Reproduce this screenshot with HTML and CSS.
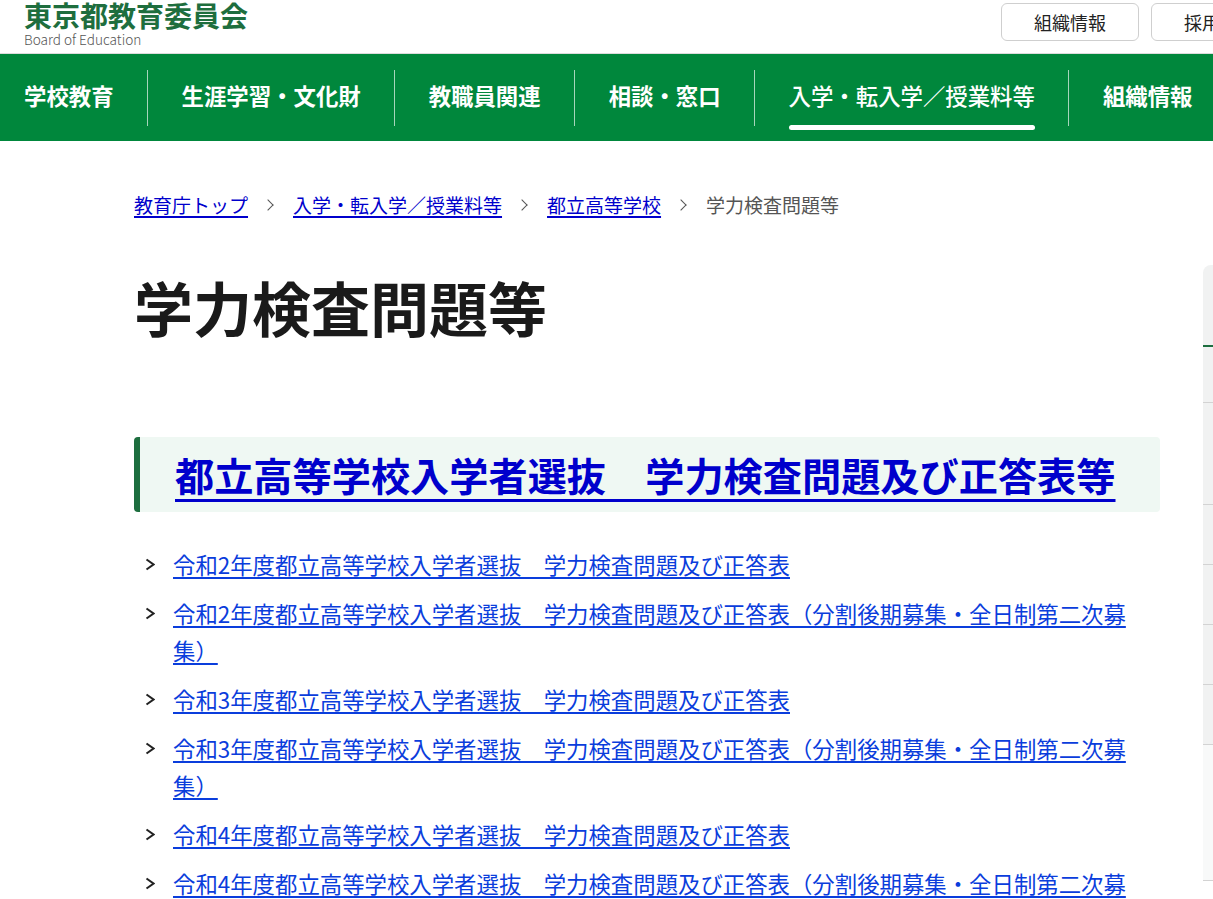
FILE: index.html
```html
<!DOCTYPE html>
<html lang="ja">
  <head>
    <meta charset="UTF-8" />
    <meta name="viewport" content="width=device-width, initial-scale=1.0" />
    <title>学力検査問題等</title>
    <link rel="stylesheet" href="styles.css">
  </head>
  <body>
    <div class="site">
      <header class="site-header">
        <a class="logo" href="#">
          <span class="logo-title">東京都教育委員会</span>
          <span class="logo-sub">Board of Education</span>
        </a>
        <ul class="header-links">
          <li><a href="#">組織情報</a></li>
          <li><a href="#">採用情報</a></li>
        </ul>
      </header>

      <nav class="global-nav">
        <ul>
          <li><a href="#">学校教育</a></li>
          <li><a href="#">生涯学習・文化財</a></li>
          <li><a href="#">教職員関連</a></li>
          <li><a href="#">相談・窓口</a></li>
          <li><a class="active" href="#">入学・転入学／授業料等</a></li>
          <li><a href="#">組織情報</a></li>
        </ul>
      </nav>

      <div class="layout">
        <main class="main">
          <ol class="breadcrumb">
            <li><a href="#">教育庁トップ</a></li>
            <li><a href="#">入学・転入学／授業料等</a></li>
            <li><a href="#">都立高等学校</a></li>
            <li><span class="current">学力検査問題等</span></li>
          </ol>

          <h1 class="page-title">学力検査問題等</h1>

          <section class="section">
            <h2 class="section-heading"><a href="#">都立高等学校入学者選抜　学力検査問題及び正答表等</a></h2>
            <ul class="link-list">
              <li>
                <svg class="chev" viewBox="0 0 10 13"><polyline points="1.5,1.5 8.5,6.5 1.5,11.5" /></svg>
                <a href="#">令和2年度都立高等学校入学者選抜　学力検査問題及び正答表</a>
              </li>
              <li>
                <svg class="chev" viewBox="0 0 10 13"><polyline points="1.5,1.5 8.5,6.5 1.5,11.5" /></svg>
                <a href="#">令和2年度都立高等学校入学者選抜　学力検査問題及び正答表（分割後期募集・全日制第二次募集）</a>
              </li>
              <li>
                <svg class="chev" viewBox="0 0 10 13"><polyline points="1.5,1.5 8.5,6.5 1.5,11.5" /></svg>
                <a href="#">令和3年度都立高等学校入学者選抜　学力検査問題及び正答表</a>
              </li>
              <li>
                <svg class="chev" viewBox="0 0 10 13"><polyline points="1.5,1.5 8.5,6.5 1.5,11.5" /></svg>
                <a href="#">令和3年度都立高等学校入学者選抜　学力検査問題及び正答表（分割後期募集・全日制第二次募集）</a>
              </li>
              <li>
                <svg class="chev" viewBox="0 0 10 13"><polyline points="1.5,1.5 8.5,6.5 1.5,11.5" /></svg>
                <a href="#">令和4年度都立高等学校入学者選抜　学力検査問題及び正答表</a>
              </li>
              <li>
                <svg class="chev" viewBox="0 0 10 13"><polyline points="1.5,1.5 8.5,6.5 1.5,11.5" /></svg>
                <a href="#">令和4年度都立高等学校入学者選抜　学力検査問題及び正答表（分割後期募集・全日制第二次募集）</a>
              </li>
            </ul>
          </section>
        </main>

        <aside class="side-nav">
          <p class="side-title">都立高等学校</p>
          <ul class="side-list">
            <li><a class="is-top" href="#">入学者選抜</a></li>
            <li><a class="is-long" href="#">都立高等学校入学者選抜実施要綱・同細目</a></li>
            <li><a href="#">入学者選抜の結果</a></li>
            <li><a href="#">応募状況</a></li>
            <li><a href="#">学力検査問題等</a></li>
            <li><a href="#">転学・編入学</a></li>
            <li class="side-sub"><a href="#">関連リンク</a></li>
          </ul>
        </aside>
      </div>
    </div>
  </body>
</html>
```

FILE: styles.css
```css
* {
  margin: 0;
  padding: 0;
  box-sizing: border-box;
}
ul,
ol {
  list-style: none;
}
body {
  overflow-x: hidden;
  font-family: "Noto Sans CJK JP", "Noto Sans", sans-serif;
  color: #1a1a1a;
  background: #fff;
  text-spacing-trim: space-all;
}
a {
  color: inherit;
  text-decoration: none;
}
.site {
  min-width: 1313px;
}

/* header */
.site-header {
  display: flex;
  align-items: flex-start;
  height: 54px;
  padding: 0 24px;
  border-bottom: 1px solid #dcdcdc;
}
.logo {
  display: flex;
  flex-direction: column;
}
.logo-title {
  font-size: 28px;
  font-weight: 700;
  line-height: 30px;
  color: #1e6e3e;
}
.logo-sub {
  margin-top: 1px;
  font-size: 13.6px;
  font-weight: 300;
  line-height: 16px;
  color: #555;
}
.header-links {
  display: flex;
  gap: 12px;
  margin-left: auto;
  margin-top: 3px;
}
.header-links a {
  display: flex;
  justify-content: center;
  align-items: center;
  width: 138px;
  height: 38px;
  border: 1px solid #cfcfcf;
  border-radius: 6px;
  font-size: 18px;
  color: #222;
}

/* global nav */
.global-nav {
  height: 87px;
  background-color: #00873c;
}
.global-nav ul {
  display: flex;
  height: 100%;
  padding-left: 24px;
}
.global-nav li {
  display: flex;
  align-items: center;
}
.global-nav li + li::before {
  content: "";
  width: 1px;
  height: 56px;
  background-color: rgba(255, 255, 255, 0.65);
}
.global-nav a {
  position: relative;
  display: flex;
  align-items: center;
  height: 100%;
  padding: 0 33.5px 6px;
  font-size: 22.4px;
  font-weight: 700;
  color: #fff;
  white-space: nowrap;
}
.global-nav li:first-child a {
  padding-left: 0;
}
.global-nav a.active {
  font-weight: 500;
}
.global-nav a.active::after {
  content: "";
  position: absolute;
  left: 33.5px;
  right: 33.5px;
  bottom: 11px;
  height: 5px;
  border-radius: 3px;
  background-color: #fff;
}

/* layout */
.layout {
  display: flex;
  align-items: flex-start;
  padding-left: 134px;
  gap: 43px;
}
.main {
  flex: 0 0 1026px;
  padding-top: 50px;
  padding-bottom: 80px;
}

/* breadcrumb */
.breadcrumb {
  display: flex;
  align-items: center;
  font-size: 19px;
  line-height: 28.5px;
}
.breadcrumb li {
  display: flex;
  align-items: center;
}
.breadcrumb li + li::before {
  content: "";
  width: 7px;
  height: 7px;
  margin: 0 21px 0 16px;
  border-top: 1.5px solid #555;
  border-right: 1.5px solid #555;
  transform: rotate(45deg);
}
.breadcrumb a {
  color: #0000cc;
  text-decoration: underline;
  text-decoration-thickness: 2px;
  text-underline-offset: 3px;
}
.breadcrumb .current {
  color: #555;
}

/* title */
.page-title {
  margin-top: 46px;
  font-size: 59px;
  font-weight: 700;
  line-height: 1.4;
  color: #1a1a1a;
}

/* section */
.section {
  margin-top: 89px;
}
.section-heading {
  padding: 10px 20px 10px 35px;
  border-left: 6px solid #1d6e3f;
  border-radius: 4px;
  background-color: #eff8f3;
  font-size: 39.2px;
  font-weight: 700;
  line-height: 1.4;
}
.section-heading a {
  color: #0000cc;
  text-decoration: underline;
  text-decoration-thickness: 3px;
  text-underline-offset: 8px;
}
.link-list {
  margin-top: 34px;
}
.link-list li {
  display: flex;
  align-items: flex-start;
  font-size: 22.4px;
  line-height: 37px;
}
.link-list li + li {
  margin-top: 12px;
}
.chev {
  flex: 0 0 auto;
  width: 10px;
  height: 13px;
  margin: 12px 18px 0 11px;
  fill: none;
  stroke: #222;
  stroke-width: 2;
}
.link-list a {
  color: #0a3ddc;
  text-decoration: underline;
  text-decoration-thickness: 2px;
  text-underline-offset: 3px;
}

/* side nav */
.side-nav {
  flex: 0 0 280px;
  margin-top: 124px;
  border-radius: 8px 0 0 0;
  background-color: #f1f2f2;
  overflow: hidden;
}
.side-title {
  display: flex;
  align-items: center;
  height: 82px;
  padding: 0 20px;
  border-bottom: 2px solid #1d6e3f;
  font-size: 20px;
  font-weight: 700;
}
.side-list a {
  display: flex;
  align-items: center;
  min-height: 60px;
  padding: 0 20px;
  border-bottom: 1px solid #d3d3d3;
  font-size: 16px;
}
.side-list a.is-top {
  min-height: 56px;
}
.side-list a.is-long {
  min-height: 102px;
}
.side-list .side-sub a {
  min-height: 136px;
  background-color: #f8f9f9;
}
```
